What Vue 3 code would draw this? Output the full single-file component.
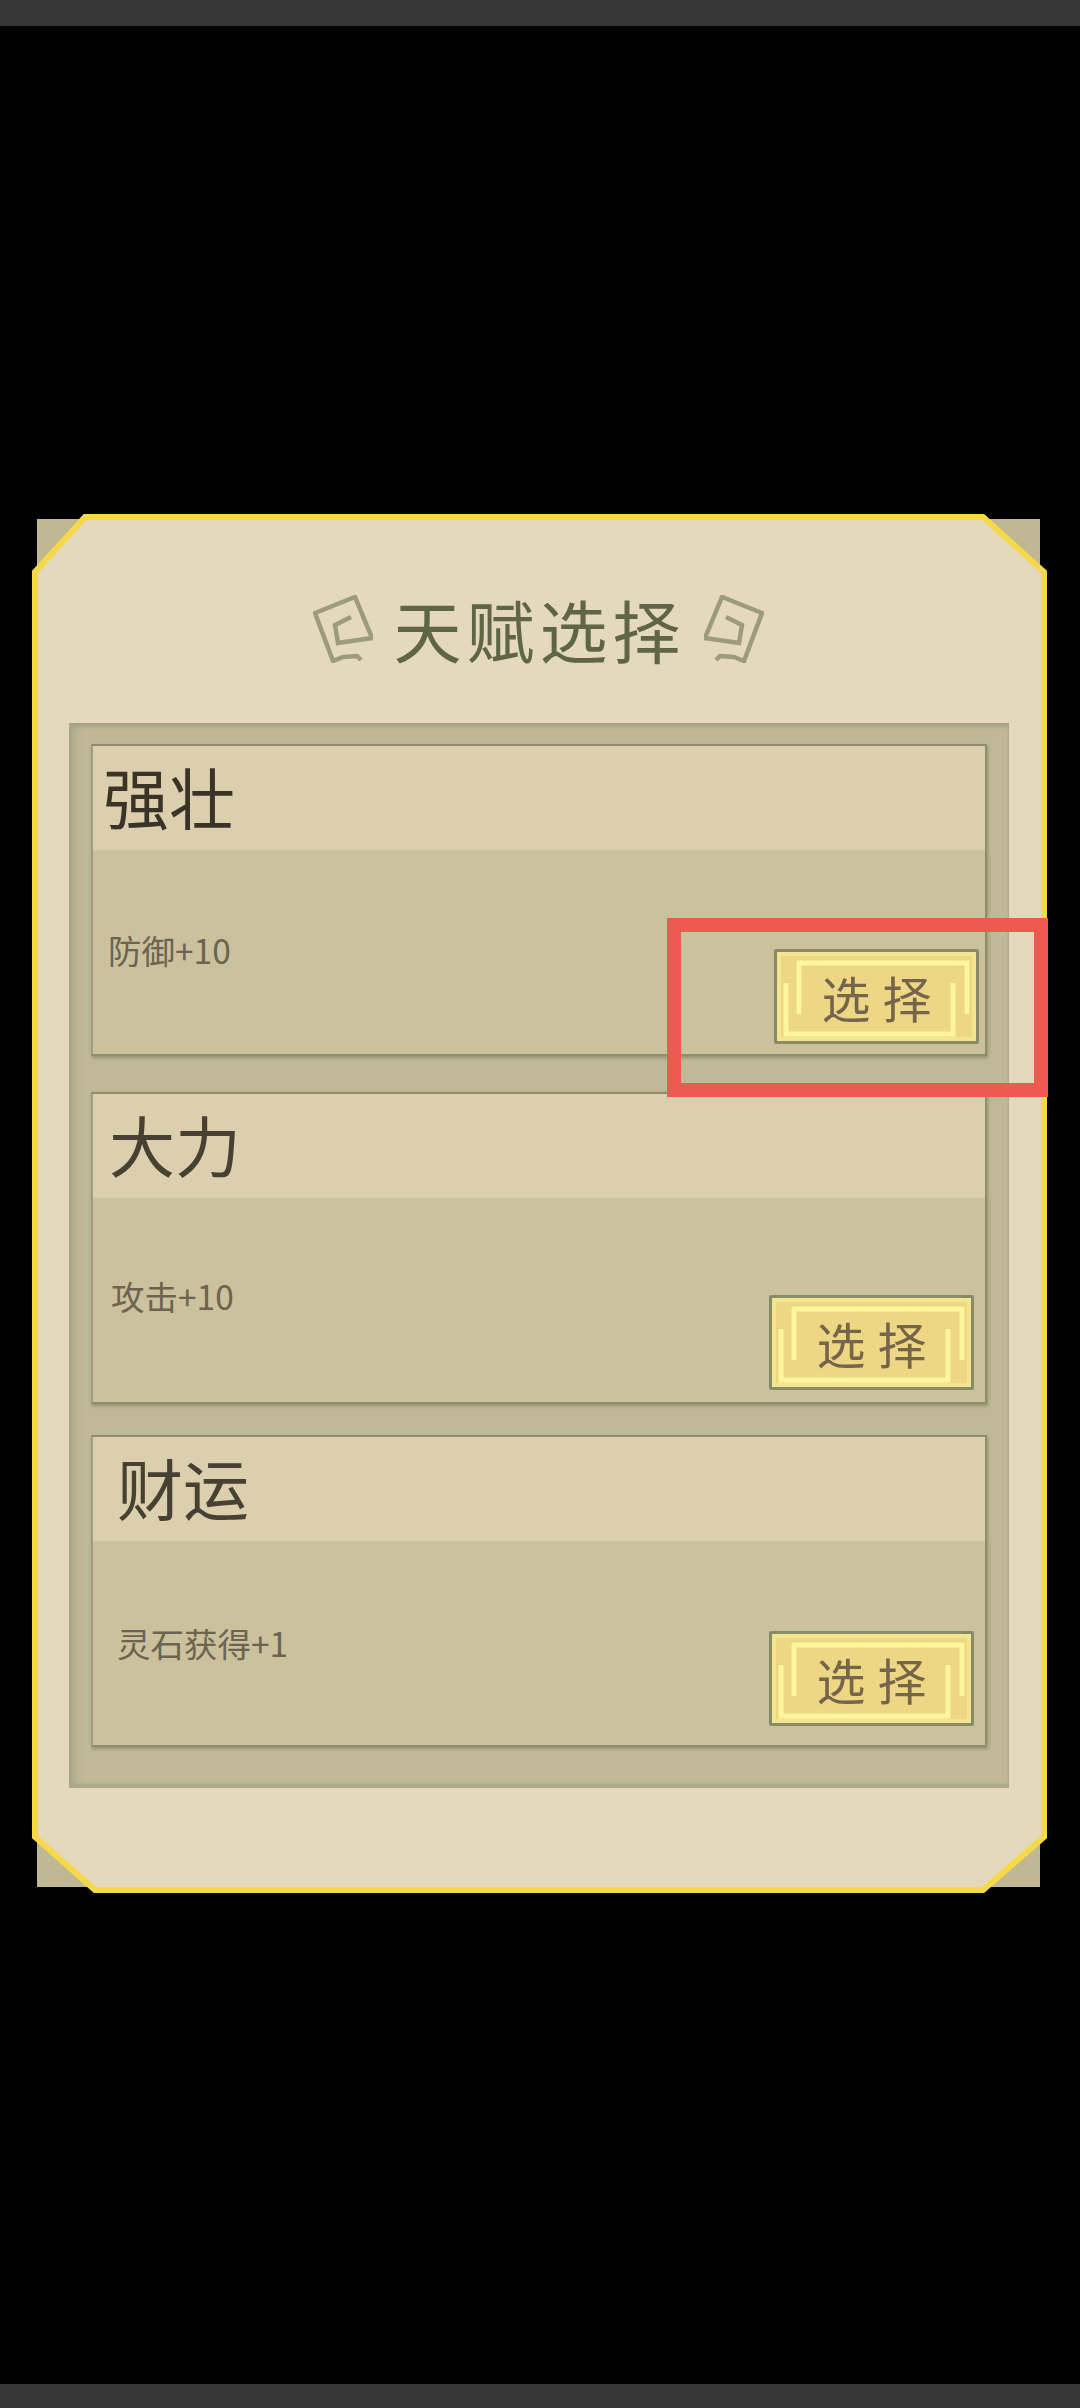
<script setup>
const talents = [
  { name: '强壮', desc: '防御+10', variant: 'first' },
  { name: '大力', desc: '攻击+10', variant: 'second' },
  { name: '财运', desc: '灵石获得+1', variant: 'third' }
]
</script>

<template>
  <div class="screen">
    <div class="top-bar"></div>

    <main class="stage">
      <section class="panel">
        <svg class="frame" viewBox="0 0 1016 1380" aria-hidden="true">
          <polygon class="frame-corner" points="5,5 56,5 5,60" />
          <polygon class="frame-corner" points="1008,5 948,5 1008,60" />
          <polygon class="frame-corner" points="5,1373 5,1320 62,1373" />
          <polygon class="frame-corner" points="1008,1373 1008,1320 948,1373" />
          <polygon
            class="frame-body"
            points="53,3 951,3 1012,58 1012,1323 951,1376 63,1376 3,1323 3,58"
          />
        </svg>

        <header class="title-row">
          <svg class="title-icon" viewBox="0 0 60 68" aria-hidden="true">
            <path d="M48 65 L44 61 L30 62 L20 66 L2 18 L42 2 L59 43 L25 48 L22 30 L38 22" />
          </svg>
          <h1 class="title">天赋选择</h1>
          <svg class="title-icon flipped" viewBox="0 0 60 68" aria-hidden="true">
            <path d="M48 65 L44 61 L30 62 L20 66 L2 18 L42 2 L59 43 L25 48 L22 30 L38 22" />
          </svg>
        </header>

        <div class="talent-list">
          <article
            v-for="talent in talents"
            :key="talent.name"
            class="card"
            :class="talent.variant"
          >
            <div class="card-head">{{ talent.name }}</div>
            <div class="card-body">
              <p class="card-desc">{{ talent.desc }}</p>
              <button class="pick-btn" type="button">
                <svg class="pick-deco" viewBox="0 0 199 89" aria-hidden="true">
                  <path d="M22 62 V11 H190 V62" />
                  <path d="M9 31 V82 H176 V31" />
                </svg>
                <span class="pick-label">选择</span>
              </button>
            </div>
          </article>
        </div>
      </section>
    </main>

    <div class="bottom-bar"></div>

    <div class="highlight"></div>
  </div>
</template>

<style>
html,
body {
  margin: 0;
  background: #000;
}
</style>

<style scoped>
.screen {
  position: relative;
  display: flex;
  flex-direction: column;
  width: 1080px;
  height: 2408px;
  overflow: hidden;
  background: #000;
  font-family: "Noto Sans CJK SC", "Noto Sans", sans-serif;
}

.top-bar {
  height: 26px;
  background: #363636;
}

.bottom-bar {
  height: 24px;
  background: #363636;
}

.stage {
  flex: 1;
  padding: 488px 0 0 32px;
}

.panel {
  position: relative;
  display: flex;
  flex-direction: column;
  width: 1016px;
  height: 1380px;
}

.frame {
  position: absolute;
  inset: 0;
  width: 100%;
  height: 100%;
}

.frame-corner {
  fill: #bfb892;
}

.frame-body {
  fill: #e5d9bd;
  stroke: #f6d94b;
  stroke-width: 6;
  stroke-linejoin: miter;
}

.title-row {
  position: relative;
  display: flex;
  align-items: center;
  justify-content: center;
  gap: 20px;
  box-sizing: border-box;
  height: 86px;
  margin: 72px 0 51px;
  padding-right: 3px;
}

.title-icon {
  width: 60px;
  height: 68px;
  fill: none;
  stroke: #9c9b7c;
  stroke-width: 4.5;
}

.title-icon.flipped {
  transform: scaleX(-1);
}

.title {
  margin: 0 -2px 0 0;
  font-size: 68px;
  font-weight: 400;
  line-height: 86px;
  letter-spacing: 5px;
  color: #5f6647;
}

.talent-list {
  position: relative;
  display: flex;
  flex-direction: column;
  align-items: flex-end;
  box-sizing: border-box;
  width: 940px;
  height: 1065px;
  margin-left: 37px;
  padding: 21px 22px;
  background: #bfb997;
  box-shadow: inset 0 4px 3px #a7a382, inset 12px 0 10px -6px #aca887, inset 0 -4px 3px #aca887;
}

.card {
  display: flex;
  flex-direction: column;
  box-sizing: border-box;
  width: 896px;
  height: 312px;
  background: #cbc19c;
  border: 2px solid #8f8c6f;
  border-left-color: #a09c7e;
  box-shadow: 1px 2px 3px rgba(110, 105, 75, 0.5);
}

.card.second {
  margin-top: 36px;
}

.card.third {
  margin-top: 31px;
}

.card-head {
  height: 104px;
  background: #dbcfae;
  font-size: 66px;
  line-height: 98px;
  color: #474133;
}

.card.first .card-head {
  padding-left: 10px;
  color: #3a3428;
}

.card.second .card-head {
  padding-left: 16px;
}

.card.third .card-head {
  padding-left: 24px;
}

.card-body {
  flex: 1;
  display: flex;
  justify-content: space-between;
  align-items: flex-start;
}

.card-desc {
  margin: 0;
  font-size: 33.5px;
  line-height: 44px;
  color: #6c6350;
}

.card.first .card-desc {
  padding: 78px 0 0 15px;
}

.card.second .card-desc {
  padding: 76px 0 0 18px;
}

.card.third .card-desc {
  padding: 80px 0 0 24px;
}

.pick-btn {
  position: relative;
  align-self: flex-end;
  box-sizing: border-box;
  width: 205px;
  height: 95px;
  padding: 0;
  background: #edd785;
  border: 3px solid #888a68;
  border-radius: 2px;
  box-shadow: inset 0 0 0 4px #f4e58f;
  font-family: inherit;
}

.card.first .pick-btn {
  margin: 0 6px 10px 0;
}

.card.second .pick-btn {
  margin: 0 11px 12px 0;
}

.card.third .pick-btn {
  margin: 0 11px 19px 0;
}

.pick-deco {
  position: absolute;
  inset: 0;
  width: 100%;
  height: 100%;
  fill: none;
  stroke: #fdf69c;
  stroke-width: 5;
}

.pick-label {
  position: relative;
  display: block;
  margin-right: -12px;
  font-size: 49px;
  line-height: 89px;
  letter-spacing: 12px;
  color: #75654a;
}

.highlight {
  position: absolute;
  left: 667px;
  top: 918px;
  box-sizing: border-box;
  width: 381px;
  height: 179px;
  border: 14px solid #ee5a50;
}
</style>
